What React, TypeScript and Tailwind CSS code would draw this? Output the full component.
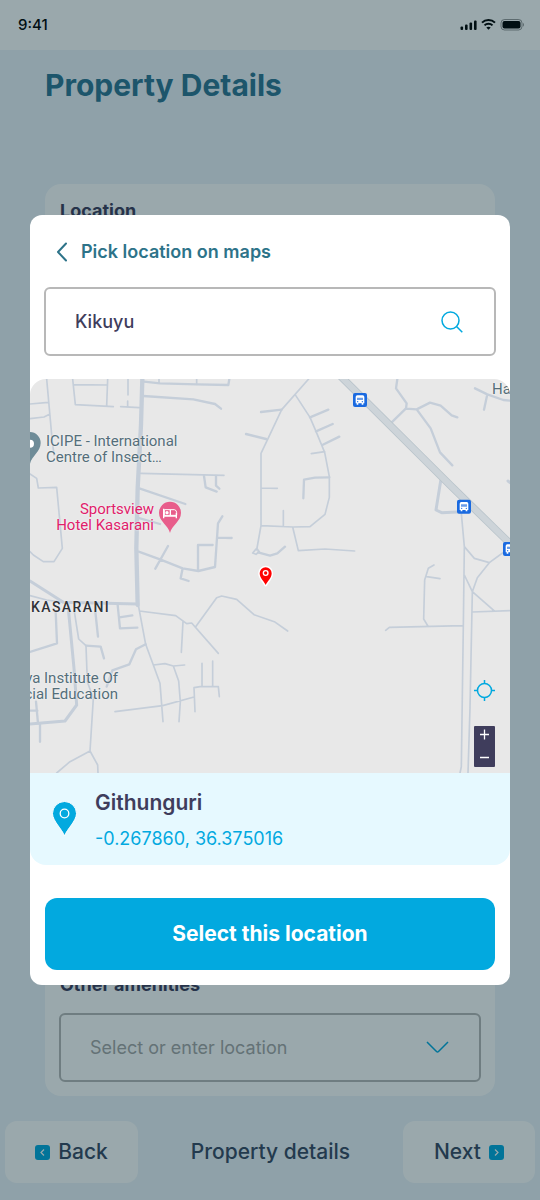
import React, { useState } from 'react';

interface Road {
  width: number;
  d: string;
}

interface LocationSearchProps {
  value: string;
  onChange: (value: string) => void;
}

// Streets of the map tile, grouped by stroke width
const ROADS: Road[] = [
  {
    width: 5,
    d: `M50 12L66 190L72 240 M0 87L55 82 M0 131L42 126L60 117 M128 12L136 89L250 95 M130 29L232 30
      M233 12L230 92 M294 12V60 M293 78V95 M272 95L328 98 M387 12V25 M500 12V28
      M332 295L582 301 M0 297L20 310L25 339L80 337L97 520L72 560L40 560L10 540L0 530
      M836 12L755 104L720 178L693 235V452L680 525 M795 58L840 127L858 169L884 232L898 305V367L885 418L840 455L790 456L693 452
      M693 339L742 340 M844 236L884 230 M760 407V452 M788 456L805 527L885 522L974 528
      M680 520L668 534L678 538L688 530Z
      M1294 415L1303 515L1300 750L1294 1175L1290 1194 M1303 515L1333 550L1378 563L1430 525
      M1378 563L1342 608L1327 650 M1303 600L1327 650L1392 707 M1327 650L1320 1000L1314 1194
      M1327 711L1440 707 M1300 752L1078 757L1067 766 M1193 752L1181 732L1184 615L1195 580L1212 570 M1190 605L1230 611
      M133 710L146 792L168 812L172 920L190 970L180 1128L120 1160L80 1194 M180 1128L203 1170L204 1194
      M325 690L347 808L370 870L390 925L399 1040 M328 708L437 722L470 746L485 744L565 835
      M497 755L560 668L575 663L620 673L672 719L733 740L773 768 M459 740L454 832
      M370 870L405 866L430 873L464 870 M430 873L446 918L451 980L447 1040
      M255 1010L398 992L492 966 M495 1010L492 938L515 934L565 935L568 965 M516 865V934 M548 858V934 M0 662L50 675L100 682`,
  },
  {
    width: 7,
    d: `M342 20L390 25L500 28L595 30L598 12 M340 63L490 73L555 87L573 101
      M522 303L527 337L560 350 M558 303V332L568 341 M328 340L466 387 M322 428L390 447
      M326 530L390 553L458 580L505 588L555 576L564 445L577 424 M564 488L605 489 M504 588V510H548 M376 581L414 513
      M458 580L452 610L476 618 M693 111L755 104 M648 177L708 192 M684 532L720 542L742 535L765 515
      M840 127L895 104 M858 169L908 147 M877 210L928 185 M898 307L855 308L822 314L820 370
      M1102 12L1098 40L1130 85L1128 100L1082 145 M1128 101L1160 103L1200 83L1232 92L1265 121L1282 127
      M1335 40L1372 58L1420 75L1440 77 M1372 58L1362 104 M1160 103L1202 160L1230 232L1267 271
      M77 710L81 805L0 831 M196 710L204 785 M168 812L212 815L222 850 M263 690L270 760L322 758 M268 727L307 721
      M347 808L318 823L298 868L247 886L230 935 M18 980L24 1045 M0 1007H22 M30 1045V1100`,
  },
  {
    width: 9,
    d: `M0 618L100 682L323 687 M114 690L132 880L140 990L105 1038L0 1047
      M1232 318L1218 405L1235 413L1295 410 M1434 318L1442 324`,
  },
  { width: 13, d: 'M337 12L333 150L323 340L319 520L323 690' },
];

const BUS_STOPS = [
  { x: 990, y: 75 },
  { x: 1302, y: 395 },
  { x: 1440, y: 522 },
];

const StatusBar: React.FC = () => (
  <header className="flex h-[50px] items-center justify-between bg-white pl-[18px] pr-4 text-black">
    <span className="text-[15px] font-medium leading-5">9:41</span>
    <svg className="h-4 w-16" viewBox="0 0 64 16" fill="currentColor" aria-hidden="true">
      <rect x="0.500" y="9.500" width="2.600" height="3.500" rx="1" />
      <rect x="5" y="7.500" width="2.600" height="5.500" rx="1" />
      <rect x="9.500" y="5.500" width="2.600" height="7.500" rx="1" />
      <rect x="14" y="3.500" width="2.600" height="9.500" rx="1" />
      <g fill="none" stroke="currentColor" strokeWidth="2">
        <path d="M22 5.600C25.500 2 31.500 2 35 5.600" />
        <path d="M24.500 8.400C26.700 6.200 30.300 6.200 32.500 8.400" />
      </g>
      <path d="M28.500 12.700L26.300 10.500C27.500 9.400 29.500 9.400 30.700 10.500Z" />
      <rect x="41" y="2.500" width="21" height="10.500" rx="3.500" fill="none" stroke="currentColor" strokeOpacity=".4" />
      <rect x="42.500" y="4" width="18" height="7.500" rx="2" />
      <path d="M63 6V9.500C64.200 9 64.200 6.500 63 6Z" fillOpacity=".45" />
    </svg>
  </header>
);

const MapTile: React.FC = () => (
  <svg
    className="h-full w-full"
    viewBox="0 12 1440 1182"
    preserveAspectRatio="xMinYMin slice"
    aria-hidden="true"
  >
    {ROADS.map(road => (
      <path
        key={road.width}
        d={road.d}
        fill="none"
        stroke="#c5ced9"
        strokeWidth={road.width}
        strokeLinecap="round"
        strokeLinejoin="round"
      />
    ))}

    {/* Highway */}
    <path d="M900 -28L1260 330L1460 525" fill="none" stroke="#b9c4cb" strokeWidth="23" />
    <path d="M900 -28L1260 330L1460 525" fill="none" stroke="#cdd4d9" strokeWidth="18" />

    {BUS_STOPS.map(stop => (
      <g key={stop.x} transform={`translate(${stop.x} ${stop.y})`}>
        <rect x="-21" y="-21" width="42" height="42" rx="6" fill="#1a6ae0" />
        <path d="M-13 -9Q-13 -14 -8 -14H8Q13 -14 13 -9V10H10V14H5V10H-5V14H-10V10H-13Z" fill="#fff" />
        <path d="M-9 -7H9V0H-9Z" fill="#6c9ee8" />
        <circle cx="-7" cy="5" r="2" fill="#1a6ae0" />
        <circle cx="7" cy="5" r="2" fill="#1a6ae0" />
      </g>
    ))}

    {/* Institute pin */}
    <g transform="translate(0 204)">
      <path d="M0 62C-4 38 -32 26 -32 0A32 33 0 0 1 32 0C32 26 6 38 0 62Z" fill="#6f8c98" />
      <circle cx="0" cy="2" r="12" fill="#fff" />
    </g>

    {/* Hotel pin */}
    <g transform="translate(420 413)">
      <path d="M0 61C-4 38 -33 27 -33 0A33 33 0 0 1 33 0C33 27 4 38 0 61Z" fill="#e85d8b" />
      <path d="M-19 -12V17M19 0V17M-19 10H19" fill="none" stroke="#fff" strokeWidth="4" />
      <path d="M-17 -9H13Q20 -8 20 0V8H-17Z" fill="none" stroke="#fff" strokeWidth="3" />
      <circle cx="-9" cy="0" r="5" fill="#fff" />
      <path d="M1 -8V7" stroke="#fff" strokeWidth="4" />
    </g>

    {/* Selected spot */}
    <g transform="translate(707 595)">
      <path
        d="M0 35C-4 25 -18 15 -18 0A18 18 0 0 1 18 0C18 15 4 25 0 35Z"
        fill="#f00"
        stroke="#fff"
        strokeWidth="9"
        strokeLinejoin="round"
        paintOrder="stroke"
      />
      <circle cx="0" cy="-1" r="7" fill="none" stroke="#fff" strokeWidth="4" />
    </g>
  </svg>
);

const LocationMap: React.FC = () => (
  <div className="relative h-[394px] overflow-hidden rounded-t-2xl bg-[#e8e8e8] font-['Roboto',sans-serif] text-[15px] leading-4 text-[#546e7a] [text-shadow:0_0_2px_white]">
    <MapTile />
    <p className="absolute left-4 top-[54px] whitespace-nowrap">
      ICIPE - International
      <br />
      Centre of Insect…
    </p>
    <p className="absolute left-[20px] top-[122px] w-[104px] whitespace-nowrap text-right text-[#e0206a]">
      Sportsview
      <br />
      Hotel Kasarani
    </p>
    <p className="absolute left-px top-[220px] text-[14px] font-medium tracking-widest text-[#303338]">
      KASARANI
    </p>
    <p className="absolute left-[-62px] top-[291px] w-[150px] whitespace-nowrap text-right">
      Kenya Institute Of
      <br />
      Special Education
    </p>
    <p className="absolute left-[462px] top-[2px] whitespace-nowrap">Hadassah</p>

    <div className="absolute bottom-[6px] right-[15px] flex flex-col items-center gap-[25px]">
      <button type="button" aria-label="Use my location" className="text-[#02a9df]">
        <svg className="h-[21px] w-[21px]" viewBox="0 0 21 21" fill="none" stroke="currentColor">
          <circle cx="10.500" cy="10.500" r="7" strokeWidth="1.500" />
          <path d="M10.500 0V4M10.500 17V21M0 10.500H4M17 10.500H21" strokeWidth="1.500" />
        </svg>
      </button>
      <div className="flex w-[21px] flex-col rounded-[1px] bg-[#3f3d5c] text-white">
        <button type="button" aria-label="Zoom in" className="flex h-[17px] items-center justify-center">
          <svg className="h-[11px] w-[11px]" viewBox="0 0 11 11" fill="none" stroke="currentColor">
            <path d="M1 5.500H10M5.500 0.500V10.500" strokeWidth="1.300" />
          </svg>
        </button>
        <button type="button" aria-label="Zoom out" className="flex h-6 items-center justify-center pb-1 pt-2">
          <svg className="h-[11px] w-[11px]" viewBox="0 0 11 11" fill="none" stroke="currentColor">
            <path d="M1 5.500H10" strokeWidth="1.500" />
          </svg>
        </button>
      </div>
    </div>
  </div>
);

const LocationSearch: React.FC<LocationSearchProps> = ({ value, onChange }) => (
  <form
    role="search"
    onSubmit={e => e.preventDefault()}
    className="mx-[14px] flex h-[69px] items-center rounded-md border-2 border-[#b8b8b8] pl-[29px] pr-[31px]"
  >
    <input
      type="text"
      aria-label="Search location"
      value={value}
      onChange={e => onChange(e.target.value)}
      className="min-w-0 flex-1 bg-transparent text-[18px] font-medium leading-6 text-[#3f3d5c] outline-none"
    />
    <button type="submit" aria-label="Search" className="text-[#02a9df]">
      <svg className="h-[22px] w-[22px]" viewBox="0 0 22 22" fill="none" stroke="currentColor" strokeWidth="1.500">
        <circle cx="9.500" cy="9.500" r="8.500" />
        <path d="M15.500 15.500L21.300 21.300" />
      </svg>
    </button>
  </form>
);

const LocationDialog: React.FC = () => {
  const [query, setQuery] = useState('Kikuyu');

  return (
    <section
      role="dialog"
      aria-modal="true"
      aria-labelledby="dialog-title"
      className="w-full rounded-xl bg-white pb-[15px]"
    >
      <div className="flex h-[72px] items-center gap-[13px] pl-[26px] pt-[2px]">
        <button type="button" aria-label="Go back" className="text-[#2d7389]">
          <svg className="h-5 w-3" viewBox="0 0 12 20" fill="none" stroke="currentColor" strokeWidth="2">
            <path d="M10 1.500L2 10L10 18.500" strokeLinecap="round" strokeLinejoin="round" />
          </svg>
        </button>
        <h2 id="dialog-title" className="text-[18px] font-semibold leading-6 text-[#2d7389]">
          Pick location on maps
        </h2>
      </div>

      <LocationSearch value={query} onChange={setQuery} />

      <div className="mt-[23px]">
        <LocationMap />
        <div className="flex h-[92px] items-center gap-[17px] rounded-b-2xl bg-[#e6f9ff] pl-[22px]">
          <svg className="h-9 w-[26px]" viewBox="0 0 26 36" aria-hidden="true">
            <path
              d="M12.500 35C10 28 0.500 20 0.500 12.500A12 12 0 0 1 24.500 12.500C24.500 20 15 28 12.500 35Z"
              fill="#02a9df"
              stroke="#fff"
              strokeWidth="1"
            />
            <circle cx="12.500" cy="12.500" r="4.300" fill="none" stroke="#fff" strokeWidth="1.300" />
          </svg>
          <div className="pt-1">
            <h3 className="text-[21px] font-semibold leading-7 text-[#3f3d5c]">Githunguri</h3>
            <p className="mt-2 text-[18px] leading-7 text-[#02a9df]">-0.267860, 36.375016</p>
          </div>
        </div>
      </div>

      <div className="mt-[33px] px-[15px]">
        <button
          type="button"
          className="h-[72px] w-full rounded-xl bg-[#02a9df] text-[21px] font-bold leading-7 text-white"
        >
          Select this location
        </button>
      </div>
    </section>
  );
};

const PropertyForm: React.FC = () => (
  <main className="flex flex-1 flex-col px-[45px]">
    <h1 className="mt-[15px] text-[30px] font-bold leading-10 text-[#2f7693]">Property Details</h1>

    <div className="mt-[79px] flex flex-1 flex-col justify-between rounded-2xl bg-white px-[14px] pb-[14px] pt-[15px]">
      <h2 className="pl-px text-[18px] font-bold leading-6 text-[#3f3d5c]">Location</h2>
      <div>
        <label htmlFor="amenities" className="block pl-px text-[18px] font-bold leading-6 text-[#3f3d5c]">
          Other amenities
        </label>
        <div className="relative mt-4">
          <select
            id="amenities"
            className="h-[69px] w-full appearance-none rounded-md border-2 border-[#b8b8b8] bg-transparent pl-[29px] text-[18px] leading-6 text-[#a6a6a6]"
          >
            <option>Select or enter location</option>
          </select>
          <svg
            className="pointer-events-none absolute right-8 top-7 h-3 w-[23px]"
            viewBox="0 0 23 12"
            fill="none"
            stroke="#02a9df"
            strokeWidth="1.500"
            aria-hidden="true"
          >
            <path d="M1 1L10.500 10.500Q11.500 11.500 12.500 10.500L22 1" />
          </svg>
        </div>
      </div>
    </div>
  </main>
);

const ArrowBadge: React.FC<{ direction: 'left' | 'right' }> = ({ direction }) => (
  <svg className="h-[15px] w-[15px]" viewBox="0 0 15 15" fill="none" aria-hidden="true">
    <rect width="15" height="15" rx="3" fill="#02a9df" />
    <path
      d={direction === 'left' ? 'M9 4.500L6 7.500L9 10.500' : 'M6 4.500L9 7.500L6 10.500'}
      stroke="#fff"
      strokeWidth="1.200"
    />
  </svg>
);

const StepNavigation: React.FC = () => (
  <nav className="mb-[17px] mt-[25px] flex items-center justify-between px-[5px] text-[21px] font-medium leading-7 text-[#3a4963]">
    <button type="button" className="flex h-[62px] w-[133px] items-center justify-center gap-2 rounded-xl bg-white">
      <ArrowBadge direction="left" />
      Back
    </button>
    <span>Property details</span>
    <button type="button" className="flex h-[62px] w-[132px] items-center justify-center gap-2 rounded-xl bg-white">
      Next
      <ArrowBadge direction="right" />
    </button>
  </nav>
);

export default function App() {
  return (
    <div className="relative flex min-h-screen flex-col bg-[#edf4fa] font-['Inter',sans-serif]">
      <StatusBar />
      <PropertyForm />
      <StepNavigation />

      {/* Dimmed backdrop with the location picker */}
      <div className="absolute inset-0 flex items-center justify-center bg-[#02252f]/40 px-[30px]">
        <LocationDialog />
      </div>
    </div>
  );
}
